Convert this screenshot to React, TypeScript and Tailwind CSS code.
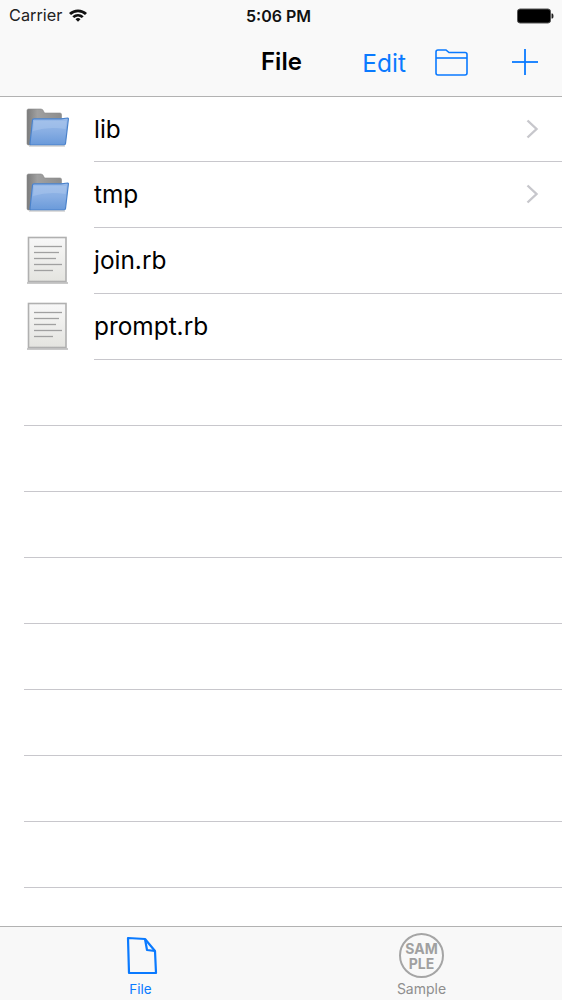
import React from "react";

function FolderIcon({ id }: { id: string }) {
  return (
    <svg width="46" height="40" viewBox="0 0 46 40" className="block -mt-[6px]">
      <defs>
        <linearGradient id={`back${id}`} x1="0" y1="0" x2="1" y2="0">
          <stop offset="0" stopColor="#7b7b7b" />
          <stop offset="0.3" stopColor="#a0a0a0" />
          <stop offset="1" stopColor="#8d8d8d" />
        </linearGradient>
        <linearGradient id={`front${id}`} x1="0" y1="0" x2="0" y2="1">
          <stop offset="0" stopColor="#9abbe9" />
          <stop offset="0.5" stopColor="#88aee3" />
          <stop offset="1" stopColor="#6a9ada" />
        </linearGradient>
      </defs>
      <path d="M3 3.500 Q3 2 4.500 2 H17 Q19 2 20 5 L20.500 6 H36 Q37.500 6 37.500 7.500 V12 H10 L7 38 H4.500 Q3 38 3 36.500 Z" fill={`url(#back${id})`} stroke="#8a8a8a" strokeWidth="0.600" />
      <path d="M8.500 13 Q8.600 11.800 10 11.800 L37 11.800 L43.800 11 Q44.500 11 44.400 12 L41.500 36.500 Q41.300 38 39.800 38 H7.500 Q5.800 38 6 36.500 Z" fill={`url(#front${id})`} stroke="#4a82cb" strokeWidth="1.200" />
      <path d="M10 14 H42.500 L41.500 22 Q25 19 9 24 Z" fill="#b4cdef" opacity="0.4" />
      <rect x="5" y="38.500" width="36" height="1" fill="#b9b9b9" />
    </svg>
  );
}

function DocIcon() {
  return (
    <svg width="46" height="50" viewBox="0 0 46 50" className="block">
      <defs>
        <linearGradient id="paper" x1="0" y1="0" x2="0" y2="1">
          <stop offset="0" stopColor="#f8f8f8" />
          <stop offset="1" stopColor="#e4e4e0" />
        </linearGradient>
      </defs>
      <rect x="3" y="46" width="41" height="2" fill="#c9c9c9" />
      <rect x="4.500" y="1.500" width="37.500" height="44" fill="url(#paper)" stroke="#b0b0b0" strokeWidth="1.600" />
      <g stroke="#a0a0a0" strokeWidth="1.300">
        <line x1="10" y1="10.500" x2="38" y2="10.500" />
        <line x1="10" y1="16.500" x2="35" y2="16.500" />
        <line x1="10" y1="22.500" x2="32" y2="22.500" />
        <line x1="10" y1="28.500" x2="38" y2="28.500" />
        <line x1="10" y1="34.500" x2="29" y2="34.500" />
      </g>
    </svg>
  );
}

function Chevron() {
  return (
    <svg width="14" height="20" viewBox="0 0 14 20" className="block -mt-[1px]">
      <path d="M1.500 1.500 L10.500 10 L1.500 18.500" fill="none" stroke="#c7c7cc" strokeWidth="2.400" />
    </svg>
  );
}

function Row({ name, kind, first }: { name: string; kind: "folder" | "file"; first?: boolean }) {
  return (
    <div className={`flex ${first ? "h-[65px]" : "h-[66px]"}`}>
      <div className="w-[94px] pl-[24px] flex items-center shrink-0">
        {kind === "folder" ? <FolderIcon id={name} /> : <DocIcon />}
      </div>
      <div className="flex-1 flex items-center justify-between border-b border-[#c8c7cc] pr-[22px]">
        <span className="text-[24.4px] text-black leading-none">{name}</span>
        {kind === "folder" && <Chevron />}
      </div>
    </div>
  );
}

export default function App() {
  return (
    <div className="w-[562px] h-[1000px] bg-white flex flex-col overflow-hidden font-['Inter','Liberation_Sans',sans-serif]">
      <header className="h-[97px] shrink-0 bg-[#f9f9f9] border-b border-[#b2b2b2] flex flex-col">
        <div className="h-[31px] flex items-center justify-between pl-[9px] pr-[8px] relative">
          <div className="flex items-center gap-[6px]">
            <span className="text-[16.300px] text-[#222]">Carrier</span>
            <svg width="20" height="14" viewBox="0 0 20 14" className="block -mt-[2px]">
              <path d="M1 5 A13 13 0 0 1 19 5 L17 7 A10.200 10.200 0 0 0 3 7 Z" fill="#111" />
              <path d="M4.300 8.200 A8.500 8.500 0 0 1 15.700 8.200 L13.800 10.100 A5.800 5.800 0 0 0 6.200 10.100 Z" fill="#111" />
              <path d="M7.500 11.300 A3.600 3.600 0 0 1 12.500 11.300 L10 13.800 Z" fill="#111" />
            </svg>
          </div>
          <span className="absolute left-[246px] text-[16px] font-semibold text-[#111]">5:06 PM</span>
          <svg width="37" height="16" viewBox="0 0 37 16" className="block">
            <rect x="0.500" y="1" width="33" height="14" rx="2.500" fill="#000" stroke="#555" />
            <path d="M34.500 5.500 H35.500 Q36.500 6 36.500 8 Q36.500 10 35.500 10.500 H34.500 Z" fill="#222" />
          </svg>
        </div>
        <div className="flex-1 flex items-center relative">
          <span className="absolute left-[261px] top-[15px] text-[24px] leading-[32px] font-semibold text-black">File</span>
          <div className="ml-auto flex items-center pr-[24px] -mt-[3px]">
            <span className="text-[24.500px] text-[#0a7aff] leading-none mr-[29px] mt-[2px]">Edit</span>
            <svg width="33" height="27" viewBox="0 0 33 27" className="block mr-[44px]" fill="none" stroke="#0a7aff" strokeWidth="1.600">
              <path d="M1 10 V3 Q1 1 3 1 H11 L14 3.500 H30 Q32 3.500 32 5.500 V24 Q32 26 30 26 H3 Q1 26 1 24 Z" />
              <line x1="1" y1="9" x2="32" y2="9" />
            </svg>
            <svg width="26" height="26" viewBox="0 0 26 26" className="block" stroke="#0a7aff" strokeWidth="1.800">
              <line x1="13" y1="0" x2="13" y2="26" />
              <line x1="0" y1="13" x2="26" y2="13" />
            </svg>
          </div>
        </div>
      </header>

      <main className="flex-1 min-h-0 overflow-hidden">
        <Row name="lib" kind="folder" first />
        <Row name="tmp" kind="folder" />
        <Row name="join.rb" kind="file" />
        <Row name="prompt.rb" kind="file" />
        {Array.from({ length: 8 }).map((_, i) => (
          <div key={i} className="ml-[24px] h-[66px] border-b border-[#c8c7cc]" />
        ))}
      </main>

      <footer className="h-[74px] shrink-0 bg-[#f8f8f8] border-t border-[#b2b2b2] flex">
        <div className="flex-1 flex flex-col items-center pt-[9px]">
          <svg width="34" height="40" viewBox="0 0 34 40" className="block ml-[3px]" fill="none" stroke="#0a7aff" strokeWidth="2.200" strokeLinejoin="round">
            <path d="M3 2 L20 3 L30 15 L31 37 H4 Z" />
            <path d="M20 3 L22 14 L30 15" />
          </svg>
          <span className="text-[13.500px] leading-[16px] text-[#0a7aff] mt-[5px]">File</span>
        </div>
        <div className="flex-1 flex flex-col items-center pt-[6px]">
          <div className="w-[45px] h-[45px] rounded-full border-2 border-[#a5a5a5] flex flex-col items-center justify-center text-[#a0a0a0] font-bold text-[14px] leading-[15px]">
            <span>SAM</span>
            <span>PLE</span>
          </div>
          <span className="text-[14px] leading-[16px] text-[#8e8e8e] mt-[3px]">Sample</span>
        </div>
      </footer>
    </div>
  );
}
